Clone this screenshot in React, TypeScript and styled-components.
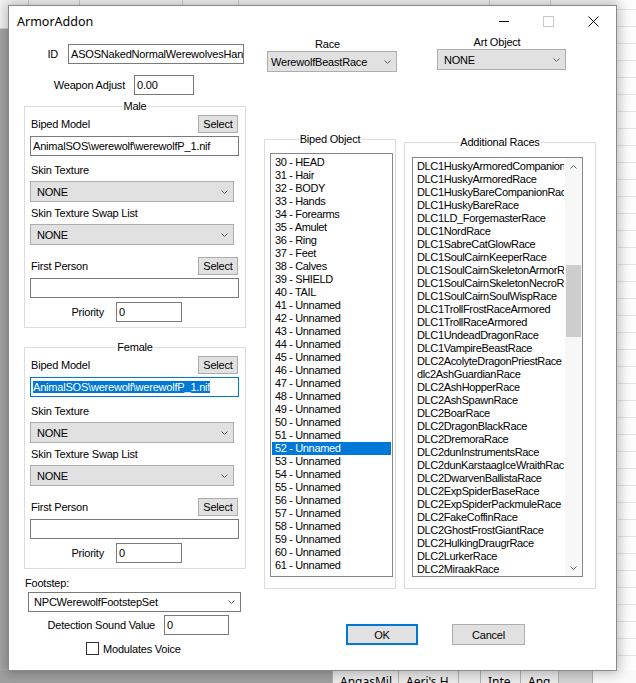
import styled, { createGlobalStyle } from "styled-components";

const GlobalStyle = createGlobalStyle`
  html, body {
    margin: 0;
    padding: 0;
  }
  body {
    background: #a7a7a7;
    font-family: "Liberation Sans", Arial, sans-serif;
    font-size: 11px;
    letter-spacing: -0.2px;
    color: #000;
  }
`;

const bipedSlots = [
  "30 - HEAD",
  "31 - Hair",
  "32 - BODY",
  "33 - Hands",
  "34 - Forearms",
  "35 - Amulet",
  "36 - Ring",
  "37 - Feet",
  "38 - Calves",
  "39 - SHIELD",
  "40 - TAIL",
  ...Array.from({ length: 21 }, (_, i) => `${41 + i} - Unnamed`),
];

const races = [
  "DLC1HuskyArmoredCompanionRace",
  "DLC1HuskyArmoredRace",
  "DLC1HuskyBareCompanionRace",
  "DLC1HuskyBareRace",
  "DLC1LD_ForgemasterRace",
  "DLC1NordRace",
  "DLC1SabreCatGlowRace",
  "DLC1SoulCairnKeeperRace",
  "DLC1SoulCairnSkeletonArmorRace",
  "DLC1SoulCairnSkeletonNecroRace",
  "DLC1SoulCairnSoulWispRace",
  "DLC1TrollFrostRaceArmored",
  "DLC1TrollRaceArmored",
  "DLC1UndeadDragonRace",
  "DLC1VampireBeastRace",
  "DLC2AcolyteDragonPriestRace",
  "dlc2AshGuardianRace",
  "DLC2AshHopperRace",
  "DLC2AshSpawnRace",
  "DLC2BoarRace",
  "DLC2DragonBlackRace",
  "DLC2DremoraRace",
  "DLC2dunInstrumentsRace",
  "DLC2dunKarstaagIceWraithRace",
  "DLC2DwarvenBallistaRace",
  "DLC2ExpSpiderBaseRace",
  "DLC2ExpSpiderPackmuleRace",
  "DLC2FakeCoffinRace",
  "DLC2GhostFrostGiantRace",
  "DLC2HulkingDraugrRace",
  "DLC2LurkerRace",
  "DLC2MiraakRace",
];

/* ---------- desktop behind the dialog ---------- */

const Desktop = styled.div`
  position: relative;
  width: 636px;
  height: 683px;
  overflow: hidden;
  background: #a7a7a7;
`;

const GridStrip = styled.div`
  position: absolute;
  left: 0;
  top: 0;
  width: 636px;
  height: 28px;
  display: flex;
  background: #f7f7f7;
  border-bottom: 1px solid #d4d4d4;
`;

const GridCell = styled.div<{ $w: number }>`
  width: ${(p) => p.$w}px;
  flex-shrink: 0;
  border-right: 1px solid #cfcfcf;
`;

const SideList = styled.div`
  position: absolute;
  left: 617px;
  top: 0;
  width: 19px;
  height: 671px;
  background: repeating-linear-gradient(
    to bottom,
    #fdfdfd 0px,
    #fdfdfd 9px,
    #e4e4e4 9px,
    #e4e4e4 10px,
    #fdfdfd 10px,
    #fdfdfd 17px
  );
`;

const TableRow = styled.div`
  position: absolute;
  left: 0;
  top: 671px;
  width: 636px;
  height: 12px;
  display: flex;
`;

const TableGap = styled.div`
  width: 332px;
  background: #a0a0a0;
`;

const TableCell = styled.div<{ $w: number; $shade?: boolean }>`
  width: ${(p) => p.$w}px;
  flex-shrink: 0;
  box-sizing: border-box;
  padding: 4px 0 0 7px;
  background: ${(p) => (p.$shade ? "#d6d6d6" : "#ececec")};
  border-left: 1px solid #b0b0b0;
  font-family: "Noto Sans", sans-serif;
  font-size: 12px;
  line-height: 14px;
  letter-spacing: 0;
  white-space: nowrap;
  overflow: hidden;
`;

const TableTail = styled.div`
  flex: 1;
  background: #fafafa;
  border-left: 1px solid #b0b0b0;
`;

/* ---------- dialog window ---------- */

const Dialog = styled.div`
  position: absolute;
  left: 8px;
  top: 5px;
  width: 609px;
  height: 666px;
  box-sizing: border-box;
  background: #fff;
  border: 1px solid #8a8a8a;
  box-shadow: 0 0 12px 2px rgba(0, 0, 0, 0.28);
`;

const TitleBar = styled.div`
  height: 31px;
  display: flex;
  align-items: center;
`;

const Title = styled.div`
  flex: 1;
  padding-left: 8px;
  font-family: "Noto Sans", sans-serif;
  font-size: 12.5px;
  letter-spacing: 0;
  color: #000;
`;

const CaptionButton = styled.div`
  width: 45px;
  height: 30px;
  display: flex;
  align-items: center;
  justify-content: center;
`;

const MinimizeGlyph = styled.div`
  width: 10px;
  height: 1px;
  background: #000;
`;

const MaximizeGlyph = styled.div`
  width: 9px;
  height: 9px;
  border: 1px solid #c8c8c8;
`;

const Body = styled.div`
  display: flex;
  gap: 18px;
  padding-left: 15px;
  margin-top: -1px;
`;

const LeftColumn = styled.div`
  width: 222px;
  display: flex;
  flex-direction: column;
`;

const RightColumn = styled.div`
  width: 332px;
  display: flex;
  flex-direction: column;
`;

/* ---------- controls ---------- */

const FormRow = styled.div<{ $top: number }>`
  display: flex;
  align-items: center;
  margin-top: ${(p) => p.$top}px;
  height: 20px;
`;

const RowLabel = styled.div<{ $w: number; $gap: number }>`
  width: ${(p) => p.$w}px;
  box-sizing: border-box;
  padding-right: ${(p) => p.$gap}px;
  text-align: right;
  white-space: nowrap;
  flex-shrink: 0;
`;

const Label = styled.div<{ $top?: number; $left?: number }>`
  line-height: 13px;
  height: 13px;
  margin-top: ${(p) => p.$top ?? 0}px;
  padding-left: ${(p) => p.$left ?? 1}px;
  white-space: nowrap;
`;

const Field = styled.div<{ $w?: number; $focused?: boolean; $top?: number }>`
  width: ${(p) => (p.$w ? `${p.$w}px` : "100%")};
  height: 20px;
  margin-top: ${(p) => p.$top ?? 0}px;
  box-sizing: border-box;
  padding-left: 2px;
  border: 1px solid ${(p) => (p.$focused ? "#0078d7" : "#7a7a7a")};
  background: #fff;
  line-height: 18px;
  white-space: nowrap;
  overflow: hidden;
  flex-shrink: 0;
`;

const Selection = styled.span`
  background: #0078d7;
  color: #fff;
`;

const Combo = styled.div<{
  $w: number;
  $top?: number;
  $left?: number;
  $pad?: number;
  $h?: number;
  $editable?: boolean;
}>`
  width: ${(p) => p.$w}px;
  height: ${(p) => p.$h ?? 21}px;
  margin-top: ${(p) => p.$top ?? 0}px;
  margin-left: ${(p) => p.$left ?? 0}px;
  box-sizing: border-box;
  display: flex;
  align-items: center;
  padding: 0 5px 0 ${(p) => p.$pad ?? 6}px;
  background: ${(p) => (p.$editable ? "#fff" : "#e1e1e1")};
  border: 1px solid ${(p) => (p.$editable ? "#7a7a7a" : "#adadad")};
  white-space: nowrap;
  flex-shrink: 0;
`;

const ComboText = styled.span`
  flex: 1;
  overflow: hidden;
`;

const PushButton = styled.div<{ $w: number; $h?: number; $default?: boolean }>`
  width: ${(p) => p.$w}px;
  height: ${(p) => p.$h ?? 18}px;
  box-sizing: border-box;
  display: flex;
  align-items: center;
  justify-content: center;
  background: #e1e1e1;
  border: ${(p) => (p.$default ? "2px solid #0078d7" : "1px solid #adadad")};
  flex-shrink: 0;
`;

const Chevron = ({ up = false }: { up?: boolean }) => (
  <svg width="7" height="4" viewBox="0 0 7 4">
    <path
      d={up ? "M0.5 3.5 L3.5 0.5 L6.5 3.5" : "M0.5 0.5 L3.5 3.5 L6.5 0.5"}
      fill="none"
      stroke="#606060"
      strokeWidth="1"
    />
  </svg>
);

const Dropdown = (props: {
  value: string;
  w: number;
  top?: number;
  left?: number;
  pad?: number;
  h?: number;
  editable?: boolean;
}) => (
  <Combo
    $w={props.w}
    $top={props.top}
    $left={props.left}
    $pad={props.pad}
    $h={props.h}
    $editable={props.editable}
  >
    <ComboText>{props.value}</ComboText>
    <Chevron />
  </Combo>
);

/* ---------- group boxes ---------- */

const GroupBox = styled.div<{ $top: number; $pad: string; $w?: number; $left?: number }>`
  position: relative;
  margin-top: ${(p) => p.$top}px;
  margin-left: ${(p) => p.$left ?? 0}px;
  width: ${(p) => (p.$w ? `${p.$w}px` : "auto")};
  box-sizing: border-box;
  border: 1px solid #dcdcdc;
  padding: ${(p) => p.$pad};
  display: flex;
  flex-direction: column;
  flex-shrink: 0;
`;

const CaptionWrap = styled.div`
  position: absolute;
  top: -7px;
  left: 0;
  right: 0;
  display: flex;
  justify-content: center;
`;

const Caption = styled.span`
  background: #fff;
  padding: 0 1px;
  line-height: 13px;
`;

const HeaderRow = styled.div<{ $top: number }>`
  display: flex;
  align-items: center;
  justify-content: space-between;
  height: 18px;
  margin-top: ${(p) => p.$top}px;
  padding-right: 1px;
`;

const GenderGroup = ({
  title,
  top,
  model,
  focused = false,
}: {
  title: string;
  top: number;
  model: string;
  focused?: boolean;
}) => (
  <GroupBox $top={top} $pad="8px 6px 5px 5px">
    <CaptionWrap>
      <Caption>{title}</Caption>
    </CaptionWrap>
    <HeaderRow $top={0}>
      <Label>Biped Model</Label>
      <PushButton $w={40}>Select</PushButton>
    </HeaderRow>
    <Field $top={3} $focused={focused}>
      {focused ? <Selection>{model}</Selection> : model}
    </Field>
    <Label $top={8}>Skin Texture</Label>
    <Dropdown value="NONE" w={204} top={4} />
    <Label $top={5}>Skin Texture Swap List</Label>
    <Dropdown value="NONE" w={204} top={4} />
    <HeaderRow $top={12}>
      <Label>First Person</Label>
      <PushButton $w={40}>Select</PushButton>
    </HeaderRow>
    <Field $top={3} />
    <FormRow $top={4}>
      <RowLabel $w={86} $gap={12}>
        Priority
      </RowLabel>
      <Field $w={66}>0</Field>
    </FormRow>
  </GroupBox>
);

/* ---------- list boxes ---------- */

const ListBox = styled.div<{ $w: number; $h: number }>`
  width: ${(p) => p.$w}px;
  height: ${(p) => p.$h}px;
  box-sizing: border-box;
  border: 1px solid #828790;
  background: #fff;
  display: flex;
  overflow: hidden;
`;

const ListItems = styled.div`
  flex: 1;
  min-width: 0;
  padding: 2px 1px 0 1px;
  overflow: hidden;
`;

const ListItem = styled.div<{ $selected?: boolean }>`
  height: 13px;
  line-height: 13px;
  padding-left: 3px;
  letter-spacing: -0.35px;
  white-space: nowrap;
  overflow: hidden;
  background: ${(p) => (p.$selected ? "#0078d7" : "transparent")};
  color: ${(p) => (p.$selected ? "#fff" : "#000")};
`;

const ScrollBar = styled.div`
  width: 17px;
  display: flex;
  flex-direction: column;
  background: #f7f7f7;
`;

const ScrollArrow = styled.div`
  height: 17px;
  display: flex;
  align-items: center;
  justify-content: center;
`;

const ScrollTrack = styled.div`
  flex: 1;
  display: flex;
  flex-direction: column;
  align-items: center;
`;

const ScrollThumb = styled.div<{ $offset: number; $size: number }>`
  margin-top: ${(p) => p.$offset}px;
  width: 15px;
  height: ${(p) => p.$size}px;
  background: #cdcdcd;
`;

const TopRow = styled.div`
  display: flex;
  align-items: flex-start;
`;

const PickerBlock = styled.div<{ $left: number; $top: number; $w: number }>`
  width: ${(p) => p.$w}px;
  margin-left: ${(p) => p.$left}px;
  margin-top: ${(p) => p.$top}px;
  display: flex;
  flex-direction: column;
`;

const PickerLabel = styled.div`
  height: 13px;
  line-height: 13px;
  text-align: center;
  padding-right: 9px;
`;

const ListsRow = styled.div`
  display: flex;
  align-items: flex-end;
  margin-top: 67px;
`;

const ButtonRow = styled.div`
  display: flex;
  gap: 34px;
  margin-top: 35px;
  padding-left: 82px;
`;

const CheckRow = styled.div`
  display: flex;
  align-items: center;
  gap: 4px;
  margin-top: 7px;
  padding-left: 62px;
  height: 13px;
`;

const CheckBox = styled.div`
  width: 13px;
  height: 13px;
  box-sizing: border-box;
  border: 1px solid #333;
  background: #fff;
`;

export default function App() {
  return (
    <>
      <GlobalStyle />
      <Desktop>
        <GridStrip>
          <GridCell $w={28} />
          <GridCell $w={50} />
          <GridCell $w={102} />
          <GridCell $w={55} />
          <GridCell $w={250} />
          <GridCell $w={60} />
        </GridStrip>
        <SideList />
        <TableRow>
          <TableGap />
          <TableCell $w={66}>AngasMil</TableCell>
          <TableCell $w={60}>Aeri's H</TableCell>
          <TableCell $w={22} />
          <TableCell $w={40}>Inte</TableCell>
          <TableCell $w={38}>Ang</TableCell>
          <TableCell $w={34} $shade />
          <TableTail />
        </TableRow>

        <Dialog>
          <TitleBar>
            <Title>ArmorAddon</Title>
            <CaptionButton>
              <MinimizeGlyph />
            </CaptionButton>
            <CaptionButton>
              <MaximizeGlyph />
            </CaptionButton>
            <CaptionButton>
              <svg width="11" height="11" viewBox="0 0 11 11">
                <path d="M0.5 0.5 L10.5 10.5 M10.5 0.5 L0.5 10.5" stroke="#000" strokeWidth="1" />
              </svg>
            </CaptionButton>
          </TitleBar>

          <Body>
            <LeftColumn>
              <FormRow $top={8}>
                <RowLabel $w={44} $gap={10}>
                  ID
                </RowLabel>
                <Field $w={176}>ASOSNakedNormalWerewolvesHands</Field>
              </FormRow>
              <FormRow $top={11}>
                <RowLabel $w={110} $gap={9}>
                  Weapon Adjust
                </RowLabel>
                <Field $w={60}>0.00</Field>
              </FormRow>

              <GenderGroup title="Male" top={11} model="AnimalSOS\werewolf\werewolfP_1.nif" />
              <GenderGroup
                title="Female"
                top={19}
                model="AnimalSOS\werewolf\werewolfP_1.nif"
                focused
              />

              <Label $top={8}>Footstep:</Label>
              <Dropdown value="NPCWerewolfFootstepSet" w={213} h={20} top={2} left={4} pad={5} editable />
              <FormRow $top={3}>
                <RowLabel $w={140} $gap={9}>
                  Detection Sound Value
                </RowLabel>
                <Field $w={65}>0</Field>
              </FormRow>
              <CheckRow>
                <CheckBox />
                <span>Modulates Voice</span>
              </CheckRow>
            </LeftColumn>

            <RightColumn>
              <TopRow>
                <PickerBlock $left={3} $top={2} $w={130}>
                  <PickerLabel>Race</PickerLabel>
                  <Dropdown value="WerewolfBeastRace" w={130} pad={3} />
                </PickerBlock>
                <PickerBlock $left={40} $top={0} $w={129}>
                  <PickerLabel>Art Object</PickerLabel>
                  <Dropdown value="NONE" w={129} />
                </PickerBlock>
              </TopRow>

              <ListsRow>
                <GroupBox $top={0} $w={132} $pad="13px 0 11px 5px">
                  <CaptionWrap>
                    <Caption>Biped Object</Caption>
                  </CaptionWrap>
                  <ListBox $w={123} $h={424}>
                    <ListItems>
                      {bipedSlots.map((slot) => (
                        <ListItem key={slot} $selected={slot.startsWith("52")}>
                          {slot}
                        </ListItem>
                      ))}
                    </ListItems>
                  </ListBox>
                </GroupBox>

                <GroupBox $top={0} $left={8} $w={192} $pad="14px 0 11px 7px">
                  <CaptionWrap>
                    <Caption>Additional Races</Caption>
                  </CaptionWrap>
                  <ListBox $w={171} $h={420}>
                    <ListItems>
                      {races.map((race) => (
                        <ListItem key={race}>{race}</ListItem>
                      ))}
                    </ListItems>
                    <ScrollBar>
                      <ScrollArrow>
                        <Chevron up />
                      </ScrollArrow>
                      <ScrollTrack>
                        <ScrollThumb $offset={90} $size={72} />
                      </ScrollTrack>
                      <ScrollArrow>
                        <Chevron />
                      </ScrollArrow>
                    </ScrollBar>
                  </ListBox>
                </GroupBox>
              </ListsRow>

              <ButtonRow>
                <PushButton $w={72} $h={21} $default>
                  OK
                </PushButton>
                <PushButton $w={73} $h={21}>
                  Cancel
                </PushButton>
              </ButtonRow>
            </RightColumn>
          </Body>
        </Dialog>
      </Desktop>
    </>
  );
}
